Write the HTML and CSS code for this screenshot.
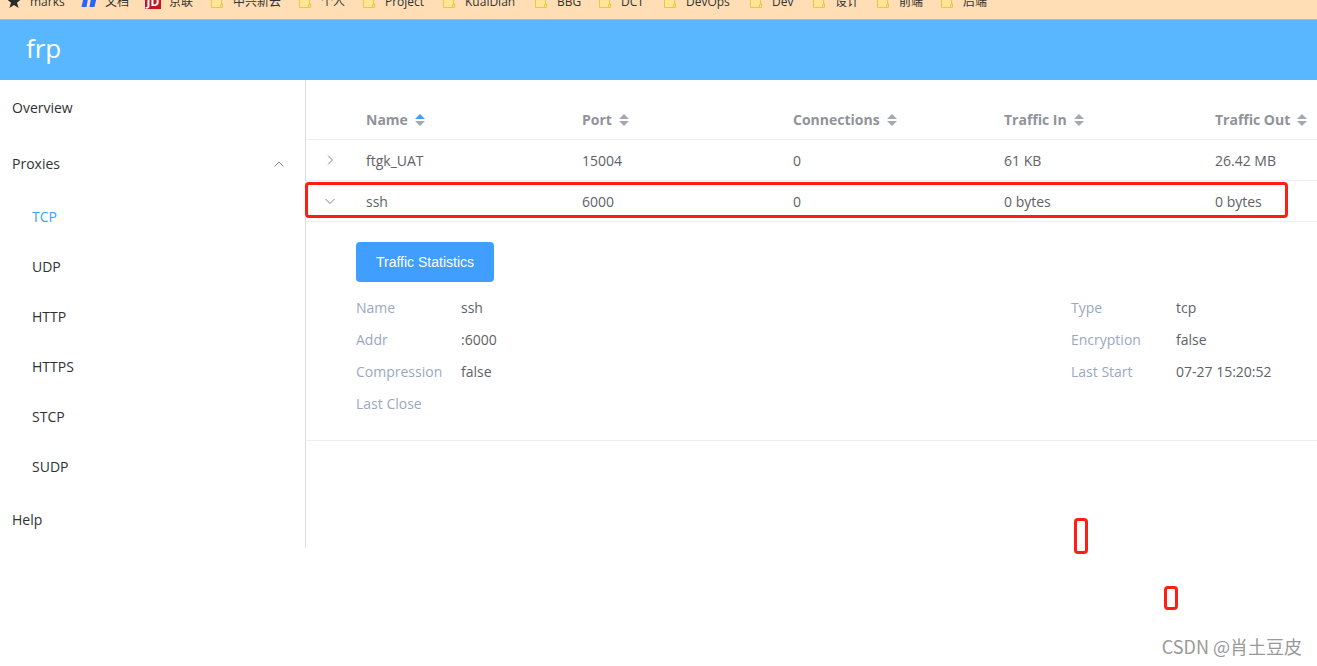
FILE: index.html
```html
<!DOCTYPE html>
<html lang="en">
<head>
<meta charset="utf-8">
<title>frp</title>
<link rel="stylesheet" href="styles.css">
</head>
<body>
<svg class="defs" aria-hidden="true">
  <symbol id="folder" viewBox="0 0 16 16">
    <path d="M2.500 2.500h10v8h1v4h-11z" fill="#ffe694" stroke="#ebc64a"/>
    <path d="M11.500 14.500v-3h1.500" fill="none" stroke="#ebc64a"/>
  </symbol>
  <symbol id="sort" viewBox="0 0 10 12">
    <path class="up" d="M5 0l5 5H0z"/><path class="down" d="M5 12l5-5H0z"/>
  </symbol>
</svg>

<nav class="bookmarks" aria-label="Bookmarks">
  <a class="bookmark" href="#"><svg class="icon" viewBox="0 0 16 16"><path d="M8 1l2 5 5 .4-4 3.300 1.600 5.300L8 12l-4.600 3L5 9.700 1 6.400 6 6z" fill="#2b2b2b"/></svg>marks</a>
  <a class="bookmark" href="#"><svg class="icon" viewBox="0 0 16 16"><path d="M3 3h4.500L5.500 14H.500zM10.500 3H16l-2.500 11H8.500z" fill="#2468f2"/></svg>文档</a>
  <a class="bookmark" href="#"><span class="jd">JD</span>京联</a>
  <a class="bookmark" href="#"><svg class="icon"><use href="#folder"/></svg>中兴新云</a>
  <a class="bookmark" href="#"><svg class="icon"><use href="#folder"/></svg>个人</a>
  <a class="bookmark" href="#"><svg class="icon"><use href="#folder"/></svg>Project</a>
  <a class="bookmark" href="#"><svg class="icon"><use href="#folder"/></svg>KuaiDian</a>
  <a class="bookmark" href="#"><svg class="icon"><use href="#folder"/></svg>BBG</a>
  <a class="bookmark" href="#"><svg class="icon"><use href="#folder"/></svg>DCT</a>
  <a class="bookmark" href="#"><svg class="icon"><use href="#folder"/></svg>DevOps</a>
  <a class="bookmark" href="#"><svg class="icon"><use href="#folder"/></svg>Dev</a>
  <a class="bookmark" href="#"><svg class="icon"><use href="#folder"/></svg>设计</a>
  <a class="bookmark" href="#"><svg class="icon"><use href="#folder"/></svg>前端</a>
  <a class="bookmark" href="#"><svg class="icon"><use href="#folder"/></svg>后端</a>
</nav>

<header class="header"><a class="brand" href="#">frp</a></header>

<div class="layout">
  <nav class="sidebar" aria-label="Main">
    <a class="item" href="#">Overview</a>
    <button class="item" type="button" aria-expanded="true">Proxies
      <svg class="chevron" viewBox="0 0 12 12"><path d="M1.500 8.500L6 4l4.500 4.500"/></svg>
    </button>
    <a class="item sub active" href="#">TCP</a>
    <a class="item sub" href="#">UDP</a>
    <a class="item sub" href="#">HTTP</a>
    <a class="item sub" href="#">HTTPS</a>
    <a class="item sub" href="#">STCP</a>
    <a class="item sub" href="#">SUDP</a>
    <a class="item" href="#">Help</a>
  </nav>

  <main class="content">
    <table class="proxies">
      <colgroup><col class="col-expand"><col class="col-name"><col class="col-data"><col class="col-data"><col class="col-data"><col></colgroup>
      <thead>
        <tr>
          <th></th>
          <th><button class="sort ascending" type="button">Name<svg class="carets"><use href="#sort"/></svg></button></th>
          <th><button class="sort" type="button">Port<svg class="carets"><use href="#sort"/></svg></button></th>
          <th><button class="sort" type="button">Connections<svg class="carets"><use href="#sort"/></svg></button></th>
          <th><button class="sort" type="button">Traffic In<svg class="carets"><use href="#sort"/></svg></button></th>
          <th><button class="sort" type="button">Traffic Out<svg class="carets"><use href="#sort"/></svg></button></th>
        </tr>
      </thead>
      <tbody>
        <tr>
          <td class="toggle-cell"><button class="toggle" type="button" aria-label="Expand ftgk_UAT" aria-expanded="false"><svg class="chevron" viewBox="0 0 12 12"><path d="M4 1.500L8.500 6 4 10.500"/></svg></button></td>
          <td>ftgk_UAT</td><td>15004</td><td>0</td><td>61 KB</td><td>26.42 MB</td>
        </tr>
        <tr>
          <td class="toggle-cell"><button class="toggle" type="button" aria-label="Collapse ssh" aria-expanded="true"><svg class="chevron" viewBox="0 0 12 12"><path d="M1.500 4L6 8.500 10.500 4"/></svg></button></td>
          <td>ssh</td><td>6000</td><td>0</td><td>0 bytes</td><td>0 bytes</td>
        </tr>
        <tr>
          <td class="expanded" colspan="6">
            <button class="primary" type="button">Traffic Statistics</button>
            <dl class="details">
              <dt>Name</dt><dd>ssh</dd><dt>Type</dt><dd>tcp</dd>
              <dt>Addr</dt><dd>:6000</dd><dt>Encryption</dt><dd>false</dd>
              <dt>Compression</dt><dd>false</dd><dt>Last Start</dt><dd>07-27 15:20:52</dd>
              <dt>Last Close</dt><dd></dd>
            </dl>
          </td>
        </tr>
      </tbody>
    </table>
    <div class="mark mark-row"></div>
    <div class="mark mark-tall"></div>
    <div class="mark mark-short"></div>
  </main>
</div>
<div class="watermark">CSDN @肖土豆皮</div>
</body>
</html>
```

FILE: styles.css
```css
* { box-sizing: border-box; }

body {
  position: relative;
  min-height: 100vh;
  margin: 0;
  background: #fff;
  color: #606266;
  font: 14px/20px "Open Sans", "Noto Sans", "Noto Sans CJK SC", sans-serif;
}

a { color: inherit; text-decoration: none; }
button { border: 0; padding: 0; background: none; color: inherit; font: inherit; cursor: pointer; }
.defs { position: absolute; width: 0; height: 0; }

.bookmarks {
  display: grid;
  grid-template-columns: 75px 64px 64px 88px 64px 80px 92px 64px 65px 86px 63px 64px 64px 64px;
  align-content: end;
  height: 20px;
  padding: 0 0 7px 6px;
  overflow: hidden;
  border-bottom: 1px solid #c9b597;
  background: #ffdeb5;
  color: #333;
  font-size: 12px;
}
.bookmark { display: flex; align-items: center; gap: 8px; height: 20px; white-space: nowrap; }
.icon, .jd { flex: none; width: 16px; height: 16px; margin-bottom: 2px; }
.jd {
  background: #c9141e;
  color: #fff;
  font-weight: 700;
  line-height: 18px;
  text-align: center;
}

.header { display: flex; align-items: center; height: 60px; padding: 0 26px; background: #58b7ff; color: #fff; }
.brand { font-size: 26px; line-height: 36px; padding-bottom: 4px; }

.layout { display: flex; align-items: flex-start; }

.sidebar { flex: 0 0 306px; border-right: 1px solid #dcdfe6; color: #303133; }
.item {
  display: flex;
  align-items: center;
  justify-content: space-between;
  width: 100%;
  height: 56px;
  padding: 0 20px 0 12px;
}
.sub { height: 50px; padding-left: 32px; }
.active { color: #409eff; }
.chevron { display: block; width: 12px; height: 12px; fill: none; stroke: #808389; }

.content { position: relative; flex: 1; min-width: 0; padding-top: 20px; }
.proxies { width: 100%; table-layout: fixed; border-collapse: separate; border-spacing: 0; }
.col-expand { width: 50px; }
.col-name { width: 216px; }
.col-data { width: 211px; }
.proxies th, .proxies td {
  height: 41px;
  padding: 2px 0 0 10px;
  border-bottom: 1px solid #ebeef5;
  text-align: left;
  white-space: nowrap;
}
.proxies th { height: 40px; padding-top: 0; color: #909399; }
.sort { display: flex; align-items: center; gap: 7px; font-weight: 700; }
.carets { width: 10px; height: 12px; fill: #a5a8b0; }
.up { fill: var(--up, #a5a8b0); }
.ascending { --up: #409eff; }
.proxies .toggle-cell { padding: 0 2px 0 0; }
.toggle { display: block; margin: 0 auto; }

.proxies .expanded { padding: 20px 0 20px 50px; }
.primary {
  height: 40px;
  padding: 0 20px;
  border-radius: 4px;
  background: #409eff;
  color: #fff;
  font: 14px "Liberation Sans", Arial, sans-serif;
}
.details {
  display: grid;
  grid-template-columns: 105px 1fr 105px 141px;
  grid-auto-rows: 32px;
  margin: 10px 0 0;
  line-height: 32px;
}
.details dt { color: #99a9bf; }
.details dd { margin: 0; }

.mark { position: absolute; border: 3px solid #ff1e12; border-radius: 4px; pointer-events: none; }
.mark-row { top: 102px; left: -1px; right: 29px; height: 36px; }
.mark-tall { top: 438px; right: 229px; width: 14px; height: 36px; }
.mark-short { top: 506px; right: 139px; width: 14px; height: 24px; }

.watermark {
  position: absolute;
  right: 15px;
  bottom: 8px;
  color: #999;
  font: 18px/24px "Noto Sans CJK SC", sans-serif;
}
```
